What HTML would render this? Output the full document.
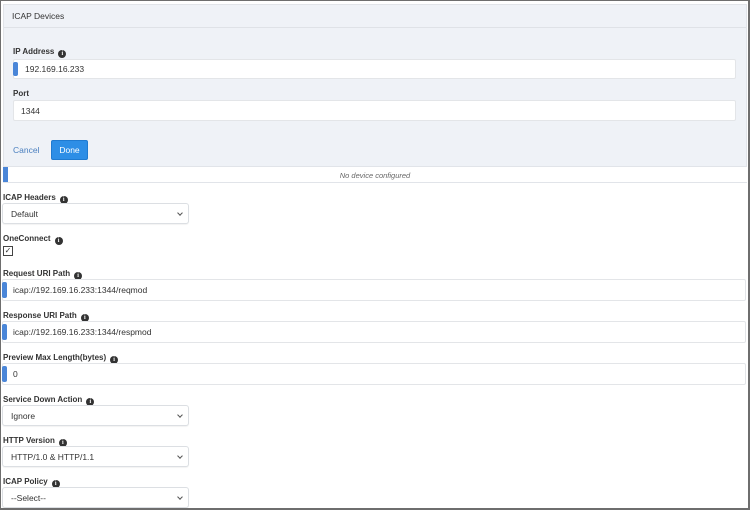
<!DOCTYPE html>
<html><head><style>
*{box-sizing:border-box;margin:0;padding:0}
body{width:750px;height:510px;background:#fff;font-family:"Liberation Sans",sans-serif;font-size:8.5px;color:#333;position:relative;overflow:hidden}
.frame{position:absolute;left:0;top:0;width:750px;height:510px;border:1px solid #6e6e6e;border-right:2px solid #6e6e6e;border-bottom:2px solid #6e6e6e}
.abs{position:absolute}
.lbl{position:absolute;font-weight:bold;font-size:8px;color:#333;white-space:nowrap}
.i{display:inline-block;width:8px;height:8px;border-radius:50%;background:#333;color:#fff;font-size:6px;text-align:center;line-height:8px;margin-left:4px;vertical-align:-1px;font-weight:bold;font-family:"Liberation Serif",serif}
.inp{position:absolute;background:#fff;border:1px solid #e3e5e8;border-radius:2px;font-size:8.5px;color:#333;padding-left:10px;display:flex;align-items:center}
.bar{position:absolute;left:-1px;top:2px;bottom:2px;width:5px;background:#4a86d8;border-radius:2px}
.sel{position:absolute;background:#fff;border:1px solid #dcdfe3;border-radius:3px;font-size:8.5px;padding-left:8px;display:flex;align-items:center;box-shadow:0 1px 1px rgba(0,0,0,.05)}
.sel:after{content:"";position:absolute;right:6px;top:7px;width:3px;height:3px;border-right:1px solid #555;border-bottom:1px solid #555;transform:rotate(45deg)}
</style></head><body>
<div class="abs" style="left:3px;top:4px;width:744px;height:179px;background:#eff2f7;border:1px solid #e1e4e9"></div>
<div class="abs" style="left:4px;top:27px;width:742px;height:1px;background:#dfe2e7"></div>
<div class="lbl" style="left:12px;top:11px;font-weight:normal;font-size:8.5px;color:#333">ICAP Devices</div>
<div class="lbl" style="left:13px;top:47px">IP Address<span class="i">i</span></div>
<div class="inp" style="left:13px;top:59px;width:723px;height:20px;padding-left:11px"><span class="bar"></span>192.169.16.233</div>
<div class="lbl" style="left:13px;top:89px">Port</div>
<div class="inp" style="left:13px;top:100px;width:723px;height:21px;padding-left:7px">1344</div>
<div class="abs" style="left:13px;top:145px;color:#4a7fbf;font-size:8.5px">Cancel</div>
<div class="abs" style="left:51px;top:140px;width:37px;height:20px;background:#2d8ee6;border:1px solid #1f7ad0;border-radius:2px;color:#fff;font-size:8.5px;text-align:center;line-height:18px">Done</div>
<div class="abs" style="left:3px;top:166px;width:744px;height:17px;background:#fff;border-top:1px solid #e1e4e9;border-bottom:1px solid #e1e4e9"></div>
<div class="abs" style="left:3px;top:167px;width:5px;height:15px;background:#4a86d8"></div>
<div class="abs" style="left:3px;top:171px;width:744px;text-align:center;font-style:italic;color:#666;font-size:7.5px">No device configured</div>

<div class="lbl" style="left:3px;top:193px">ICAP Headers<span class="i">i</span></div>
<div class="sel" style="left:2px;top:203px;width:187px;height:21px">Default</div>
<div class="lbl" style="left:3px;top:234px">OneConnect<span class="i">i</span></div>
<div class="abs" style="left:3px;top:246px;width:10px;height:10px;border:1px solid #444;font-size:8px;line-height:8px;text-align:center">✓</div>

<div class="lbl" style="left:3px;top:269px">Request URI Path<span class="i">i</span></div>
<div class="inp" style="left:2px;top:279px;width:744px;height:22px"><span class="bar"></span>icap://192.169.16.233:1344/reqmod</div>
<div class="lbl" style="left:3px;top:311px">Response URI Path<span class="i">i</span></div>
<div class="inp" style="left:2px;top:321px;width:744px;height:22px"><span class="bar"></span>icap://192.169.16.233:1344/respmod</div>
<div class="lbl" style="left:3px;top:353px">Preview Max Length(bytes)<span class="i">i</span></div>
<div class="inp" style="left:2px;top:363px;width:744px;height:22px"><span class="bar"></span>0</div>

<div class="lbl" style="left:3px;top:395px">Service Down Action<span class="i">i</span></div>
<div class="sel" style="left:2px;top:405px;width:187px;height:21px">Ignore</div>
<div class="lbl" style="left:3px;top:436px">HTTP Version<span class="i">i</span></div>
<div class="sel" style="left:2px;top:446px;width:187px;height:21px">HTTP/1.0 &amp; HTTP/1.1</div>
<div class="lbl" style="left:3px;top:477px">ICAP Policy<span class="i">i</span></div>
<div class="sel" style="left:2px;top:487px;width:187px;height:21px">--Select--</div>
<div class="frame"></div>
</body></html>
